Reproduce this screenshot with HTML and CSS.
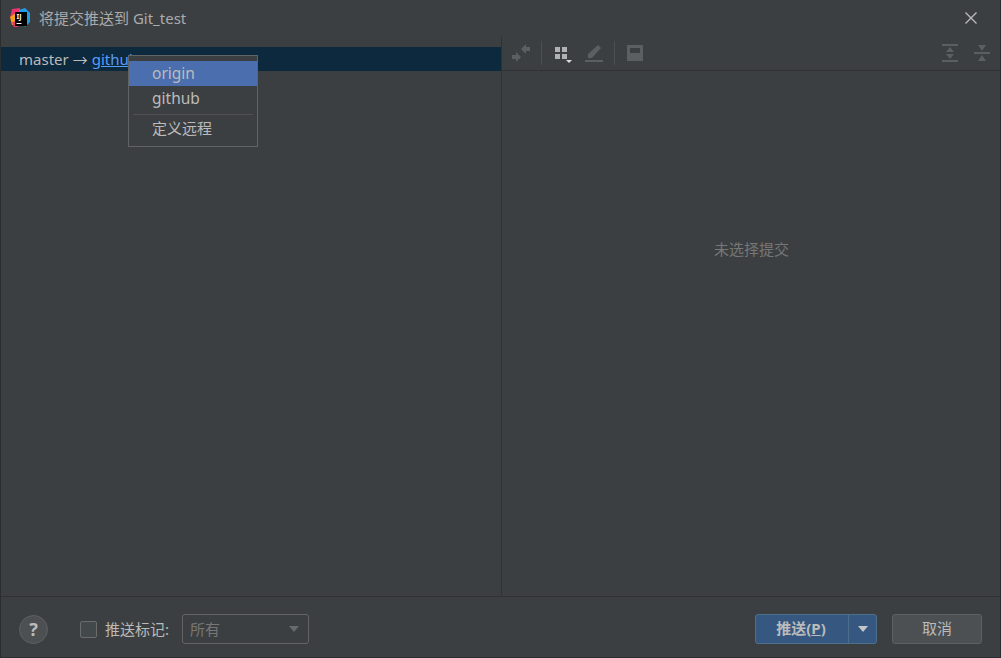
FILE: index.html
```html
<!DOCTYPE html>
<html>
<head>
    <title>将提交推送到 Git_test</title>
    <meta charset="UTF-8">
    <link rel="stylesheet" href="styles.css">
</head>
<body>
    <div class="dialog">
        <div class="titlebar">
            <svg class="app-logo" width="20" height="20" viewBox="0 0 20 20">
                <path d="M2 1 L10 0 L10 8 L0 10 Z" fill="#e8356f"/>
                <path d="M0 9 L6 5 L6 16 L2 17 Z" fill="#f9a01b"/>
                <path d="M9 2 L15 0 L20 5 L20 14 L15 19 L10 10 Z" fill="#1c9fe8"/>
                <path d="M2 14 L8 13 L8 19 L4 19 Z" fill="#e8356f"/>
                <rect x="5" y="4" width="12" height="14" fill="#000"/>
                <text x="6.5" y="11" class="logo-text">IJ</text>
                <rect x="6.5" y="15" width="5" height="1" fill="#fff"/>
            </svg>
            <span class="title-text">将提交推送到 Git_test</span>
            <svg class="close-icon" width="14" height="14" viewBox="0 0 14 14">
                <path d="M1.5 1.5 L12.5 12.5 M12.5 1.5 L1.5 12.5" stroke="#bcbcbc" stroke-width="1.3" fill="none"/>
            </svg>
        </div>

        <div class="main">
            <div class="left-pane">
                <div class="push-row">
                    <span>master</span>
                    <span class="arrow">→</span>
                    <a class="remote-link">github</a>
                </div>
                <div class="popup">
                    <div class="popup-item selected">origin</div>
                    <div class="popup-item">github</div>
                    <div class="popup-sep"></div>
                    <div class="popup-item popup-cjk">定义远程</div>
                </div>
            </div>

            <div class="right-pane">
                <div class="toolbar">
                    <svg class="tool" width="20" height="20" viewBox="0 0 20 20">
                        <path d="M10 6 L15 1 V4 H19 V8 H15 V11 Z M10 14 L5 9 V12 H1 V16 H5 V19 Z" fill="#5c5f61"/>
                    </svg>
                    <div class="tool-sep"></div>
                    <svg class="tool" width="20" height="20" viewBox="0 0 20 20">
                        <rect x="2" y="4" width="5" height="5" fill="#afb1b3"/>
                        <rect x="9" y="4" width="5" height="5" fill="#afb1b3"/>
                        <rect x="2" y="11" width="5" height="5" fill="#afb1b3"/>
                        <rect x="9" y="11" width="5" height="5" fill="#afb1b3"/>
                        <path d="M13 17 H19 L16 20 Z" fill="#dcdcdc"/>
                    </svg>
                    <svg class="tool tool-edit" width="20" height="20" viewBox="0 0 20 20">
                        <path d="M4 15 V11 L14 2 L17 5 L8 15 Z" fill="#5c5f61"/>
                        <rect x="1" y="17" width="18" height="2" fill="#5c5f61"/>
                    </svg>
                    <div class="tool-sep tool-sep-narrow"></div>
                    <svg class="tool" width="20" height="20" viewBox="0 0 20 20">
                        <path d="M2 2 H18 V18 H2 Z M5 5 V10 H15 V5 Z" fill="#5c5f61" fill-rule="evenodd"/>
                    </svg>
                    <div class="spacer"></div>
                    <svg class="tool" width="20" height="20" viewBox="0 0 20 20">
                        <path d="M2 1 H18 V3 H2 Z M2 17 H18 V19 H2 Z M10 4 L14 9 H6 Z M6 11 H14 L10 16 Z" fill="#5c5f61"/>
                    </svg>
                    <svg class="tool tool-last" width="20" height="20" viewBox="0 0 20 20">
                        <path d="M6 2 H14 L10 8 Z M2 9 H18 V11 H2 Z M10 12 L14 18 H6 Z" fill="#5c5f61"/>
                    </svg>
                </div>
                <div class="empty-text">未选择提交</div>
            </div>
        </div>

        <div class="footer">
            <div class="help-btn">?</div>
            <label class="tag-check">
                <span class="checkbox"></span>
                <span class="tag-label">推送标记:</span>
            </label>
            <div class="combo">
                <span class="combo-value">所有</span>
                <span class="combo-arrow"></span>
            </div>
            <div class="spacer"></div>
            <div class="split-btn">
                <div class="split-main">推送(<u>P</u>)</div>
                <div class="split-drop"><span class="drop-arrow"></span></div>
            </div>
            <div class="btn-cancel">取消</div>
        </div>
    </div>
</body>
</html>
```

FILE: styles.css
```css
* {
    box-sizing: border-box;
}
body {
    margin: 0;
    background-color: #3c3f41;
    font-family: "Noto Sans", "Noto Sans CJK SC", sans-serif;
    font-size: 15px;
    color: #bbbbbb;
}
.dialog {
    width: 1001px;
    height: 658px;
    display: flex;
    flex-direction: column;
    border: 1px solid #2b2d2e;
    border-top: none;
    overflow: hidden;
}
.titlebar {
    height: 36px;
    flex: none;
    display: flex;
    align-items: center;
    padding-left: 9px;
    padding-right: 22px;
}
.app-logo {
    margin-right: 9px;
}
.logo-text {
    font-size: 7px;
    font-weight: bold;
    fill: #fff;
}
.title-text {
    flex: 1;
    padding-bottom: 2px;
    font-size: 15px;
    color: #a9abad;
}
.main {
    flex: 1;
    display: flex;
    min-height: 0;
}
.left-pane {
    width: 501px;
    flex: none;
    position: relative;
    padding-top: 11px;
    border-right: 1px solid #323232;
}
.push-row {
    height: 24px;
    background-color: #0d293e;
    padding-left: 18px;
    display: flex;
    align-items: center;
    gap: 4px;
}
.arrow {
    font-family: "Noto Sans CJK SC", sans-serif;
}
.remote-link {
    color: #589df6;
    text-decoration: underline;
}
.popup {
    position: absolute;
    left: 127px;
    top: 19px;
    width: 130px;
    height: 92px;
    background-color: #3c3f41;
    border: 1px solid #616365;
    padding-top: 5px;
}
.popup-item {
    height: 25px;
    padding-left: 23px;
    line-height: 25px;
    font-size: 15.5px;
}
.popup-item.selected {
    background-color: #4b6eaf;
}
.popup-cjk {
    font-size: 15px;
}
.popup-sep {
    height: 1px;
    margin: 3px 4px 1px 4px;
    background-color: #515151;
}
.right-pane {
    flex: 1;
    display: flex;
    flex-direction: column;
}
.toolbar {
    height: 35px;
    flex: none;
    display: flex;
    align-items: center;
    padding-left: 9px;
    border-bottom: 1px solid #323232;
}
.tool {
    flex: none;
}
.tool-edit {
    margin-left: 11px;
}
.tool-sep {
    width: 1px;
    height: 24px;
    margin: 0 11px 0 10px;
    background-color: #4c4f51;
}
.tool-sep-narrow {
    margin-right: 10px;
}
.tool-last {
    margin-left: 12px;
    margin-right: 8px;
}
.spacer {
    flex: 1;
}
.empty-text {
    flex: 1;
    display: flex;
    align-items: center;
    justify-content: center;
    padding: 0 0 170px 1px;
    color: #777777;
}
.footer {
    height: 61px;
    flex: none;
    display: flex;
    align-items: center;
    border-top: 1px solid #323232;
    padding: 4px 18px 0 18px;
}
.help-btn {
    width: 29px;
    height: 29px;
    border-radius: 50%;
    background-color: #4d5052;
    border: 1px solid #5e6060;
    font-weight: bold;
    font-size: 18px;
    text-align: center;
    line-height: 26px;
    margin-right: 32px;
}
.tag-check {
    display: flex;
    align-items: center;
    gap: 8px;
}
.tag-label {
    padding-bottom: 2px;
}
.checkbox {
    width: 17px;
    height: 17px;
    background-color: #43494a;
    border: 1px solid #6b6b6b;
    border-radius: 2px;
}
.combo {
    width: 127px;
    height: 30px;
    margin-left: 13px;
    border: 1px solid #646464;
    border-radius: 3px;
    display: flex;
    align-items: center;
    justify-content: space-between;
    padding: 0 9px 0 7px;
    color: #777777;
}
.combo-value {
    padding-bottom: 2px;
}
.combo-arrow {
    width: 0;
    height: 0;
    border-left: 5.5px solid transparent;
    border-right: 5.5px solid transparent;
    border-top: 6px solid #676a6c;
}
.split-btn {
    width: 122px;
    height: 30px;
    display: flex;
    background-color: #365880;
    border: 1px solid #4c708c;
    border-radius: 3px;
    font-weight: bold;
}
.split-main {
    flex: 1;
    text-align: center;
    line-height: 26px;
    padding-right: 2px;
    border-right: 1px solid #4c708c;
}
.split-drop {
    width: 27px;
    display: flex;
    align-items: center;
    justify-content: center;
}
.drop-arrow {
    width: 0;
    height: 0;
    border-left: 5.5px solid transparent;
    border-right: 5.5px solid transparent;
    border-top: 6px solid #c4c6c8;
}
.btn-cancel {
    width: 90px;
    height: 30px;
    margin-left: 15px;
    background-color: #4c5052;
    border: 1px solid #5e6060;
    border-radius: 3px;
    text-align: center;
    line-height: 26px;
}
```
